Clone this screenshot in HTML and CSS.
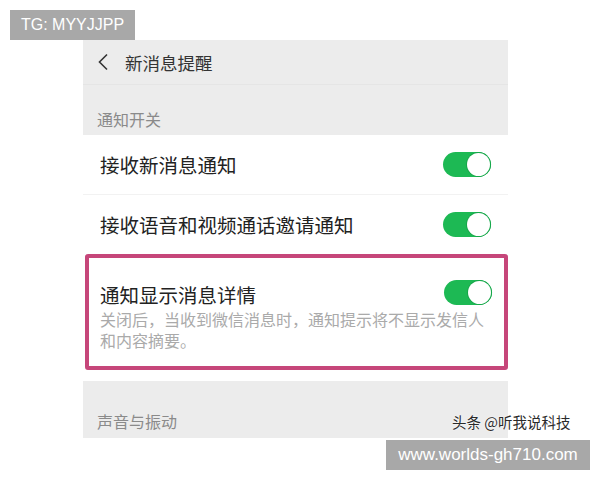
FILE: index.html
```html
<!DOCTYPE html>
<html>
<head>
    <meta charset="UTF-8">
    <title>新消息提醒</title>
    <link rel="stylesheet" href="styles.css">
</head>
<body>
    <div class="tag-mark">TG: MYYJJPP</div>

    <div class="phone">
        <div class="nav-bar">
            <svg class="back-icon" width="12" height="18" viewBox="0 0 12 18">
                <path d="M10 1.5 L2.5 9 L10 16.5" fill="none" stroke="#333" stroke-width="1.6"/>
            </svg>
            <span class="nav-title">新消息提醒</span>
        </div>
        <div class="section-label">通知开关</div>

        <div class="setting-row">
            <span class="row-title">接收新消息通知</span>
            <span class="switch on"></span>
        </div>
        <div class="setting-row last">
            <span class="row-title">接收语音和视频通话邀请通知</span>
            <span class="switch on"></span>
        </div>

        <div class="highlight-box">
            <div class="row-head">
                <span class="row-title">通知显示消息详情</span>
                <span class="switch on"></span>
            </div>
            <p class="row-desc">关闭后，当收到微信消息时，通知提示将不显示发信人和内容摘要。</p>
        </div>

        <div class="section-label bottom">声音与振动</div>
    </div>

    <div class="author-mark">头条 @听我说科技</div>
    <div class="site-mark">www.worlds-gh710.com</div>
</body>
</html>
```

FILE: styles.css
```css
body {
    margin: 0;
    padding: 40px 0 0 0;
    background-color: #fff;
    font-family: "Noto Sans CJK SC", "Noto Sans", sans-serif;
    color: #222;
}
.tag-mark {
    position: absolute;
    left: 10px;
    top: 10px;
    width: 125px;
    height: 30px;
    line-height: 30px;
    background-color: #a8a8a8;
    color: #fff;
    font-family: "Liberation Sans", Arial, sans-serif;
    font-size: 16px;
    text-align: center;
}
.phone {
    width: 425px;
    margin-left: 83px;
}
.nav-bar {
    height: 44px;
    background-color: #ececec;
    border-bottom: 1px solid #e5e5e5;
    display: flex;
    align-items: center;
}
.back-icon {
    margin-left: 14px;
    margin-right: 16px;
}
.nav-title {
    font-size: 17.5px;
    color: #333;
}
.section-label {
    height: 50px;
    background-color: #ececec;
    color: #8a8a8a;
    font-size: 16px;
    padding: 0 0 4px 14px;
    display: flex;
    align-items: flex-end;
    box-sizing: border-box;
}
.section-label.bottom {
    height: 57px;
    margin-top: 11px;
    padding-bottom: 5px;
}
.setting-row {
    height: 60px;
    display: flex;
    align-items: center;
    justify-content: space-between;
    padding: 0 17px;
    border-bottom: 1px solid #f2f2f2;
    box-sizing: border-box;
}
.setting-row.last {
    height: 59px;
    border-bottom: none;
}
.row-title {
    font-size: 19.5px;
    color: #222;
}
.switch {
    position: relative;
    width: 48px;
    height: 25px;
    border-radius: 13px;
    background-color: #1db954;
    flex-shrink: 0;
}
.switch::after {
    content: "";
    position: absolute;
    right: 1px;
    top: 1px;
    width: 23px;
    height: 23px;
    border-radius: 50%;
    background-color: #fff;
    box-shadow: 0 0 0 1px #17a64a;
}
.highlight-box {
    margin-left: 2px;
    border: 4px solid #c6467a;
    border-radius: 3px;
    padding: 21px 12px 7px 11px;
    height: 116px;
    box-sizing: border-box;
}
.row-head {
    height: 30px;
    display: flex;
    align-items: center;
    justify-content: space-between;
}
.row-head .switch {
    margin-top: -4px;
}
.row-desc {
    margin: 0;
    font-size: 16px;
    line-height: 21px;
    color: #aaa;
}
.author-mark {
    position: absolute;
    left: 452px;
    top: 411px;
    font-size: 14.5px;
    color: #2a2a2a;
    text-shadow: 0 0 2px #fff, 0 0 1px #fff;
}
.site-mark {
    position: absolute;
    left: 386px;
    top: 440px;
    width: 204px;
    height: 30px;
    line-height: 30px;
    background-color: #a8a8a8;
    color: #fff;
    font-family: "Liberation Sans", Arial, sans-serif;
    font-size: 17px;
    text-align: center;
}
```
